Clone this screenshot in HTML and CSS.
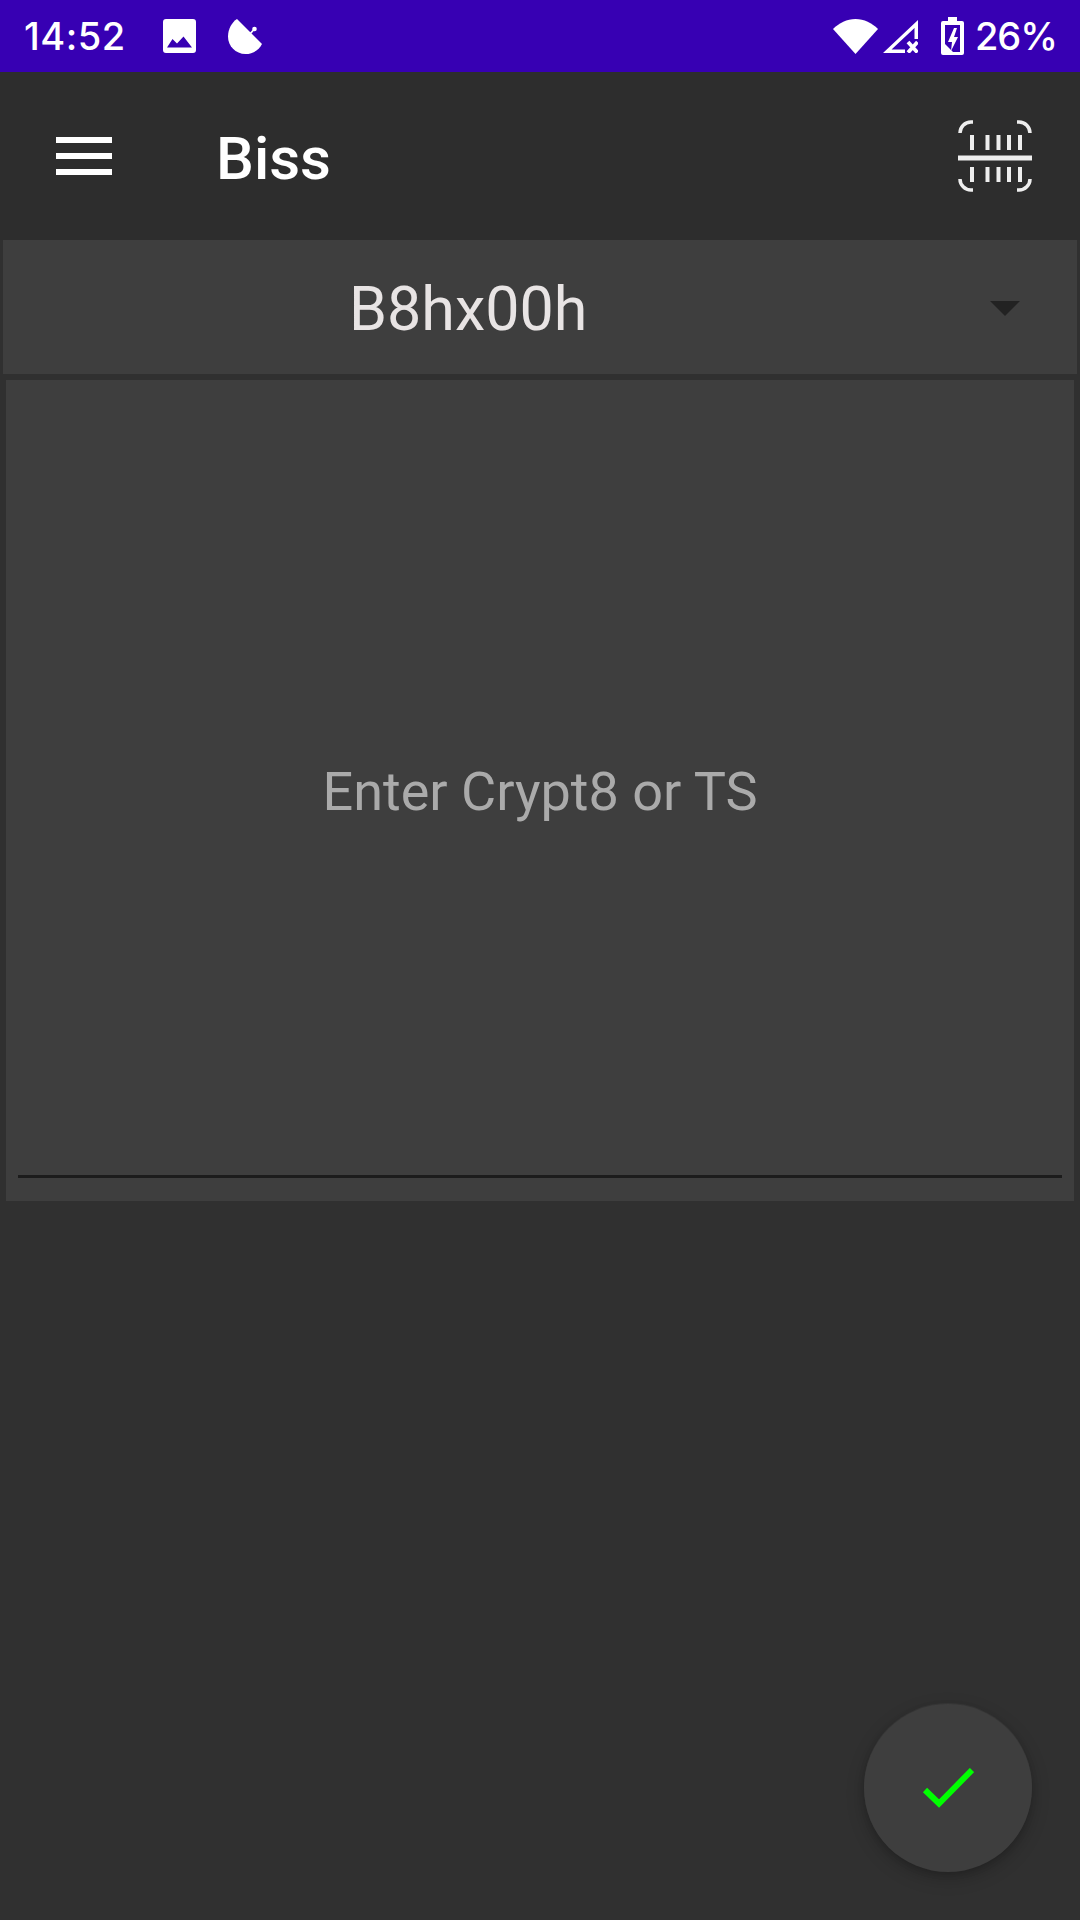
FILE: index.html
```html
<!DOCTYPE html>
<html lang="en">
<head>
<meta charset="utf-8">
<title>Biss</title>
<link rel="stylesheet" href="styles.css">
</head>
<body>
<div class="app">
  <header class="status">
    <div class="status-left">
      <span class="time">14:52</span>
      <svg class="ic-photo" viewBox="0 0 33 34"><path fill="#fff" fill-rule="evenodd" d="M3 0h27a3 3 0 0 1 3 3v28a3 3 0 0 1-3 3H3a3 3 0 0 1-3-3V3a3 3 0 0 1 3-3zM4 28.500h25L20.500 17.500 14 24.500 9.500 20z"/></svg>
      <svg class="ic-dish" viewBox="0 0 34 36"><path fill="#fff" d="M9 0L34 25C31 31 25 35 17.500 35 7.500 35 0 27 0 17.500 0 10 4 3 9 0z"/><path stroke="#fff" stroke-width="1.800" d="M21 16L26 10.500"/><circle cx="26.500" cy="10" r="2.300" fill="#fff"/></svg>
    </div>
    <div class="status-right">
      <svg class="ic-wifi" viewBox="0 0 45 35"><path fill="#fff" d="M0 10C6 4 14 0 22.500 0S39 4 45 10L22.500 35z"/></svg>
      <svg class="ic-signal" viewBox="0 0 35 33"><path fill="#fff" fill-rule="evenodd" d="M0 33L35 0v19h-3.500V8L8.500 29.500H22V33z"/><path stroke="#fff" stroke-width="3.800" d="M25 22L34.500 32.500M34.500 22L25 32.500"/></svg>
      <svg class="ic-battery" viewBox="0 0 23 38"><path fill="#fff" fill-rule="evenodd" d="M7 0h9v4h5a2 2 0 0 1 2 2v30a2 2 0 0 1-2 2H2a2 2 0 0 1-2-2V6a2 2 0 0 1 2-2h5zM4 8v19l8 8h7V8z"/><path fill="#fff" d="M13 11L7 25h4l-1 9 7-14h-4l3-9z"/></svg>
      <span class="pct">26%</span>
    </div>
  </header>

  <nav class="toolbar">
    <div class="menu"><i></i><i></i><i></i></div>
    <h1 class="title">Biss</h1>
    <svg class="ic-scan" viewBox="0 0 74 72" fill="none" stroke="#eeeeee" stroke-width="3.500">
      <path d="M2 13a11 11 0 0 1 11-11h2M59 2h2a11 11 0 0 1 11 11M2 59a11 11 0 0 0 11 11h2M59 70h2a11 11 0 0 0 11-11"/>
      <path stroke-width="5" d="M0 38H74"/>
      <path stroke-width="4" d="M14 15v15M29.500 15v15M40.500 15v15M51 15v15M62 15v15M14 47v15M29.500 47v15M40.500 47v15M51 47v15M62 47v15"/>
    </svg>
  </nav>

  <div class="spinner">
    <span class="spinner-text">B8hx00h</span>
    <span class="arrow"></span>
  </div>

  <div class="field">
    <span class="placeholder">Enter Crypt8 or TS</span>
    <div class="underline"></div>
  </div>

  <button class="fab" aria-label="Confirm">
    <svg class="ic-check" viewBox="0 0 52 40"><path fill="none" stroke="#00ff00" stroke-width="6" d="M3 22L17 35.500 50 2"/></svg>
  </button>
</div>
</body>
</html>
```

FILE: styles.css
```css
* { box-sizing: border-box; margin: 0; padding: 0; }
html, body { width: 1080px; height: 1920px; overflow: hidden; }
body { font-family: Roboto, sans-serif; background: #303030; }
.app { position: relative; width: 1080px; height: 1920px; display: flex; flex-direction: column; background: #303030; }

.status { height: 72px; background: #3700b3; display: flex; justify-content: space-between; align-items: center; color: #fff; padding: 0 23px 0 24px; flex: none; }
.status-left, .status-right { display: flex; align-items: center; }
.time { font-family: Inter, Roboto, sans-serif; font-weight: 500; font-size: 38px; line-height: 72px; letter-spacing: 0.5px; width: 139px; }
.pct { font-family: Inter, Roboto, sans-serif; font-weight: 500; font-size: 38px; line-height: 72px; letter-spacing: -1px; margin-left: 11px; }
.ic-photo { width: 33px; height: 34px; display: block; }
.ic-dish { width: 34px; height: 36px; display: block; margin-left: 32px; margin-top: 1px; }
.ic-wifi { width: 45px; height: 35px; display: block; }
.ic-signal { width: 35px; height: 33px; display: block; margin-left: 5px; margin-top: 1px; }
.ic-battery { width: 23px; height: 38px; display: block; margin-left: 23px; }

.toolbar { height: 168px; background: #2d2d2d; display: flex; align-items: center; padding: 0 48px 0 56px; flex: none; }
.menu { width: 56px; height: 38px; display: flex; flex-direction: column; justify-content: space-between; flex: none; }
.menu i { display: block; height: 6px; background: #fff; }
.title { font-size: 60px; font-weight: 500; color: #fff; margin-left: 104px; flex: 1; line-height: 70px; padding-top: 5px; }
.ic-scan { width: 74px; height: 72px; display: block; }

.spinner { height: 134px; margin: 0 3px; background: #3e3e3e; position: relative; display: flex; align-items: center; flex: none; padding: 4px 0 0 346px; }
.spinner-text { font-size: 61px; color: #e8e4e4; line-height: 130px; }
.arrow { position: absolute; left: 987px; top: 61px; width: 0; height: 0; border-left: 15px solid transparent; border-right: 15px solid transparent; border-top: 15px solid #222; }

.field { position: relative; height: 821px; margin: 6px 6px 0; background: #3e3e3e; display: flex; align-items: center; justify-content: center; flex: none; }
.placeholder { font-size: 54px; color: #aaaaaa; position: relative; top: 1px; }
.underline { position: absolute; left: 12px; right: 12px; top: 795px; height: 3px; background: #1c1c1c; }

.fab { position: absolute; left: 864px; top: 1704px; width: 168px; height: 168px; border: none; border-radius: 50%; background: #3e3e3e; box-shadow: 0 -1px 1px rgba(255,255,255,.06), 0 6px 18px rgba(0,0,0,.22), 0 2px 6px rgba(0,0,0,.12); display: flex; align-items: center; justify-content: center; }
.ic-check { width: 52px; height: 40px; display: block; }
```
